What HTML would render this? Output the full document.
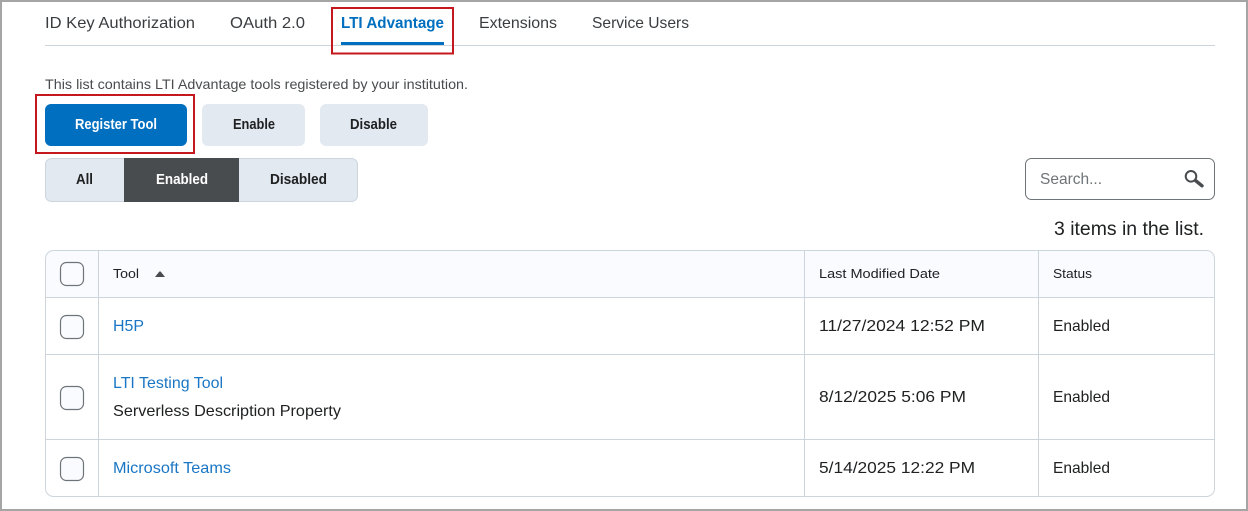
<!DOCTYPE html>
<html lang="en">
<head>
<meta charset="utf-8">
<title>LTI Advantage</title>
<style>
html,body{margin:0;padding:0;background:#fff;width:1248px;height:511px;overflow:hidden}
svg{display:block}
text{font-family:"Liberation Sans",sans-serif;fill:#202122}
.b{font-weight:700}
</style>
</head>
<body>
<svg width="1248" height="511" viewBox="0 0 1248 511" xmlns="http://www.w3.org/2000/svg">
<rect width="1248" height="511" fill="#fff"/>
<rect x="1" y="1" width="1246" height="509" fill="none" stroke="#a5a5a5" stroke-width="2"/>

<!-- tabs -->
<rect x="45" y="45" width="1170" height="1" fill="#cdd5dc"/>
<text x="45" y="28" font-size="16" textLength="150" lengthAdjust="spacingAndGlyphs" style="fill:#3a3d40">ID Key Authorization</text>
<text x="230" y="28" font-size="16" textLength="75" lengthAdjust="spacingAndGlyphs" style="fill:#3a3d40">OAuth 2.0</text>
<text x="341" y="28" font-size="16" class="b" textLength="103" lengthAdjust="spacingAndGlyphs" style="fill:#006fbf">LTI Advantage</text>
<text x="479" y="28" font-size="16" textLength="78" lengthAdjust="spacingAndGlyphs" style="fill:#3a3d40">Extensions</text>
<text x="592" y="28" font-size="16" textLength="97" lengthAdjust="spacingAndGlyphs" style="fill:#3a3d40">Service Users</text>
<rect x="341" y="42" width="103" height="3" fill="#006fbf"/>
<rect x="332" y="8" width="121" height="45.500" fill="none" stroke="#c4181e" stroke-width="2"/>

<text x="45" y="89" font-size="14" textLength="423" lengthAdjust="spacingAndGlyphs" style="fill:#494c4e">This list contains LTI Advantage tools registered by your institution.</text>

<!-- buttons -->
<rect x="36" y="95" width="158" height="58" fill="none" stroke="#c4181e" stroke-width="2"/>
<rect x="45" y="104" width="142" height="42" rx="6" fill="#006fbf"/>
<text x="75" y="129" font-size="14.500" class="b" textLength="82" lengthAdjust="spacingAndGlyphs" style="fill:#fff">Register Tool</text>
<rect x="202" y="104" width="103" height="42" rx="6" fill="#e3e9f1"/>
<text x="233" y="129" font-size="14.500" class="b" textLength="42" lengthAdjust="spacingAndGlyphs">Enable</text>
<rect x="320" y="104" width="108" height="42" rx="6" fill="#e3e9f1"/>
<text x="350" y="129" font-size="14.500" class="b" textLength="47" lengthAdjust="spacingAndGlyphs">Disable</text>

<!-- segmented filter -->
<rect x="45.500" y="158.500" width="312" height="43" rx="6" fill="#e3e9f1" stroke="#cdd5dc"/>
<rect x="124" y="158" width="115" height="44" fill="#494c4e"/>
<text x="76" y="184" font-size="14.500" class="b" textLength="17" lengthAdjust="spacingAndGlyphs">All</text>
<text x="156" y="184" font-size="14.500" class="b" textLength="52" lengthAdjust="spacingAndGlyphs" style="fill:#fff">Enabled</text>
<text x="270" y="184" font-size="14.500" class="b" textLength="57" lengthAdjust="spacingAndGlyphs">Disabled</text>

<!-- search -->
<rect x="1025.500" y="158.500" width="189" height="41" rx="6" fill="#fff" stroke="#6e7477"/>
<text x="1040" y="184" font-size="16" textLength="62" lengthAdjust="spacingAndGlyphs" style="fill:#6e7477">Search...</text>
<circle cx="1191" cy="176.300" r="5.300" fill="none" stroke="#494c4e" stroke-width="2"/>
<path d="M1195.500 180.500 L1202 185.800" stroke="#494c4e" stroke-width="3.400" stroke-linecap="round" fill="none"/>

<text x="1054" y="235" font-size="19" textLength="150" lengthAdjust="spacingAndGlyphs">3 items in the list.</text>

<!-- table -->
<path d="M45.500 297.500 V258.500 a8 8 0 0 1 8 -8 H1206.500 a8 8 0 0 1 8 8 V297.500 Z" fill="#f9fbff"/>
<rect x="45.500" y="250.500" width="1169" height="246" rx="8" fill="none" stroke="#cdd5dc"/>
<g fill="#cdd5dc">
<rect x="46" y="297" width="1168" height="1"/>
<rect x="46" y="354" width="1168" height="1"/>
<rect x="46" y="439" width="1168" height="1"/>
<rect x="98" y="251" width="1" height="245"/>
<rect x="804" y="251" width="1" height="245"/>
<rect x="1038" y="251" width="1" height="245"/>
</g>

<g fill="#f9fbff" stroke="#6e7477" stroke-width="1.200">
<rect x="60.500" y="262.500" width="23" height="23" rx="6"/>
<rect x="60.500" y="315.500" width="23" height="23" rx="6"/>
<rect x="60.500" y="386.500" width="23" height="23" rx="6"/>
<rect x="60.500" y="457.500" width="23" height="23" rx="6"/>
</g>

<text x="113" y="278" font-size="13" textLength="26" lengthAdjust="spacingAndGlyphs">Tool</text>
<path d="M155 277 L159 272 Q160 270.800 161 272 L165 277 Z" fill="#494c4e"/>
<text x="819" y="278" font-size="13" textLength="121" lengthAdjust="spacingAndGlyphs">Last Modified Date</text>
<text x="1053" y="278" font-size="13" textLength="39" lengthAdjust="spacingAndGlyphs">Status</text>

<text x="113" y="331" font-size="16" textLength="31" lengthAdjust="spacingAndGlyphs" style="fill:#1a76c4">H5P</text>
<text x="819" y="331" font-size="16" textLength="166" lengthAdjust="spacingAndGlyphs">11/27/2024 12:52 PM</text>
<text x="1053" y="331" font-size="16" textLength="57" lengthAdjust="spacingAndGlyphs">Enabled</text>

<text x="113" y="388" font-size="16" textLength="110" lengthAdjust="spacingAndGlyphs" style="fill:#1a76c4">LTI Testing Tool</text>
<text x="113" y="416" font-size="16" textLength="228" lengthAdjust="spacingAndGlyphs">Serverless Description Property</text>
<text x="819" y="402" font-size="16" textLength="147" lengthAdjust="spacingAndGlyphs">8/12/2025 5:06 PM</text>
<text x="1053" y="402" font-size="16" textLength="57" lengthAdjust="spacingAndGlyphs">Enabled</text>

<text x="113" y="473" font-size="16" textLength="118" lengthAdjust="spacingAndGlyphs" style="fill:#1a76c4">Microsoft Teams</text>
<text x="819" y="473" font-size="16" textLength="156" lengthAdjust="spacingAndGlyphs">5/14/2025 12:22 PM</text>
<text x="1053" y="473" font-size="16" textLength="57" lengthAdjust="spacingAndGlyphs">Enabled</text>
</svg>
</body>
</html>
